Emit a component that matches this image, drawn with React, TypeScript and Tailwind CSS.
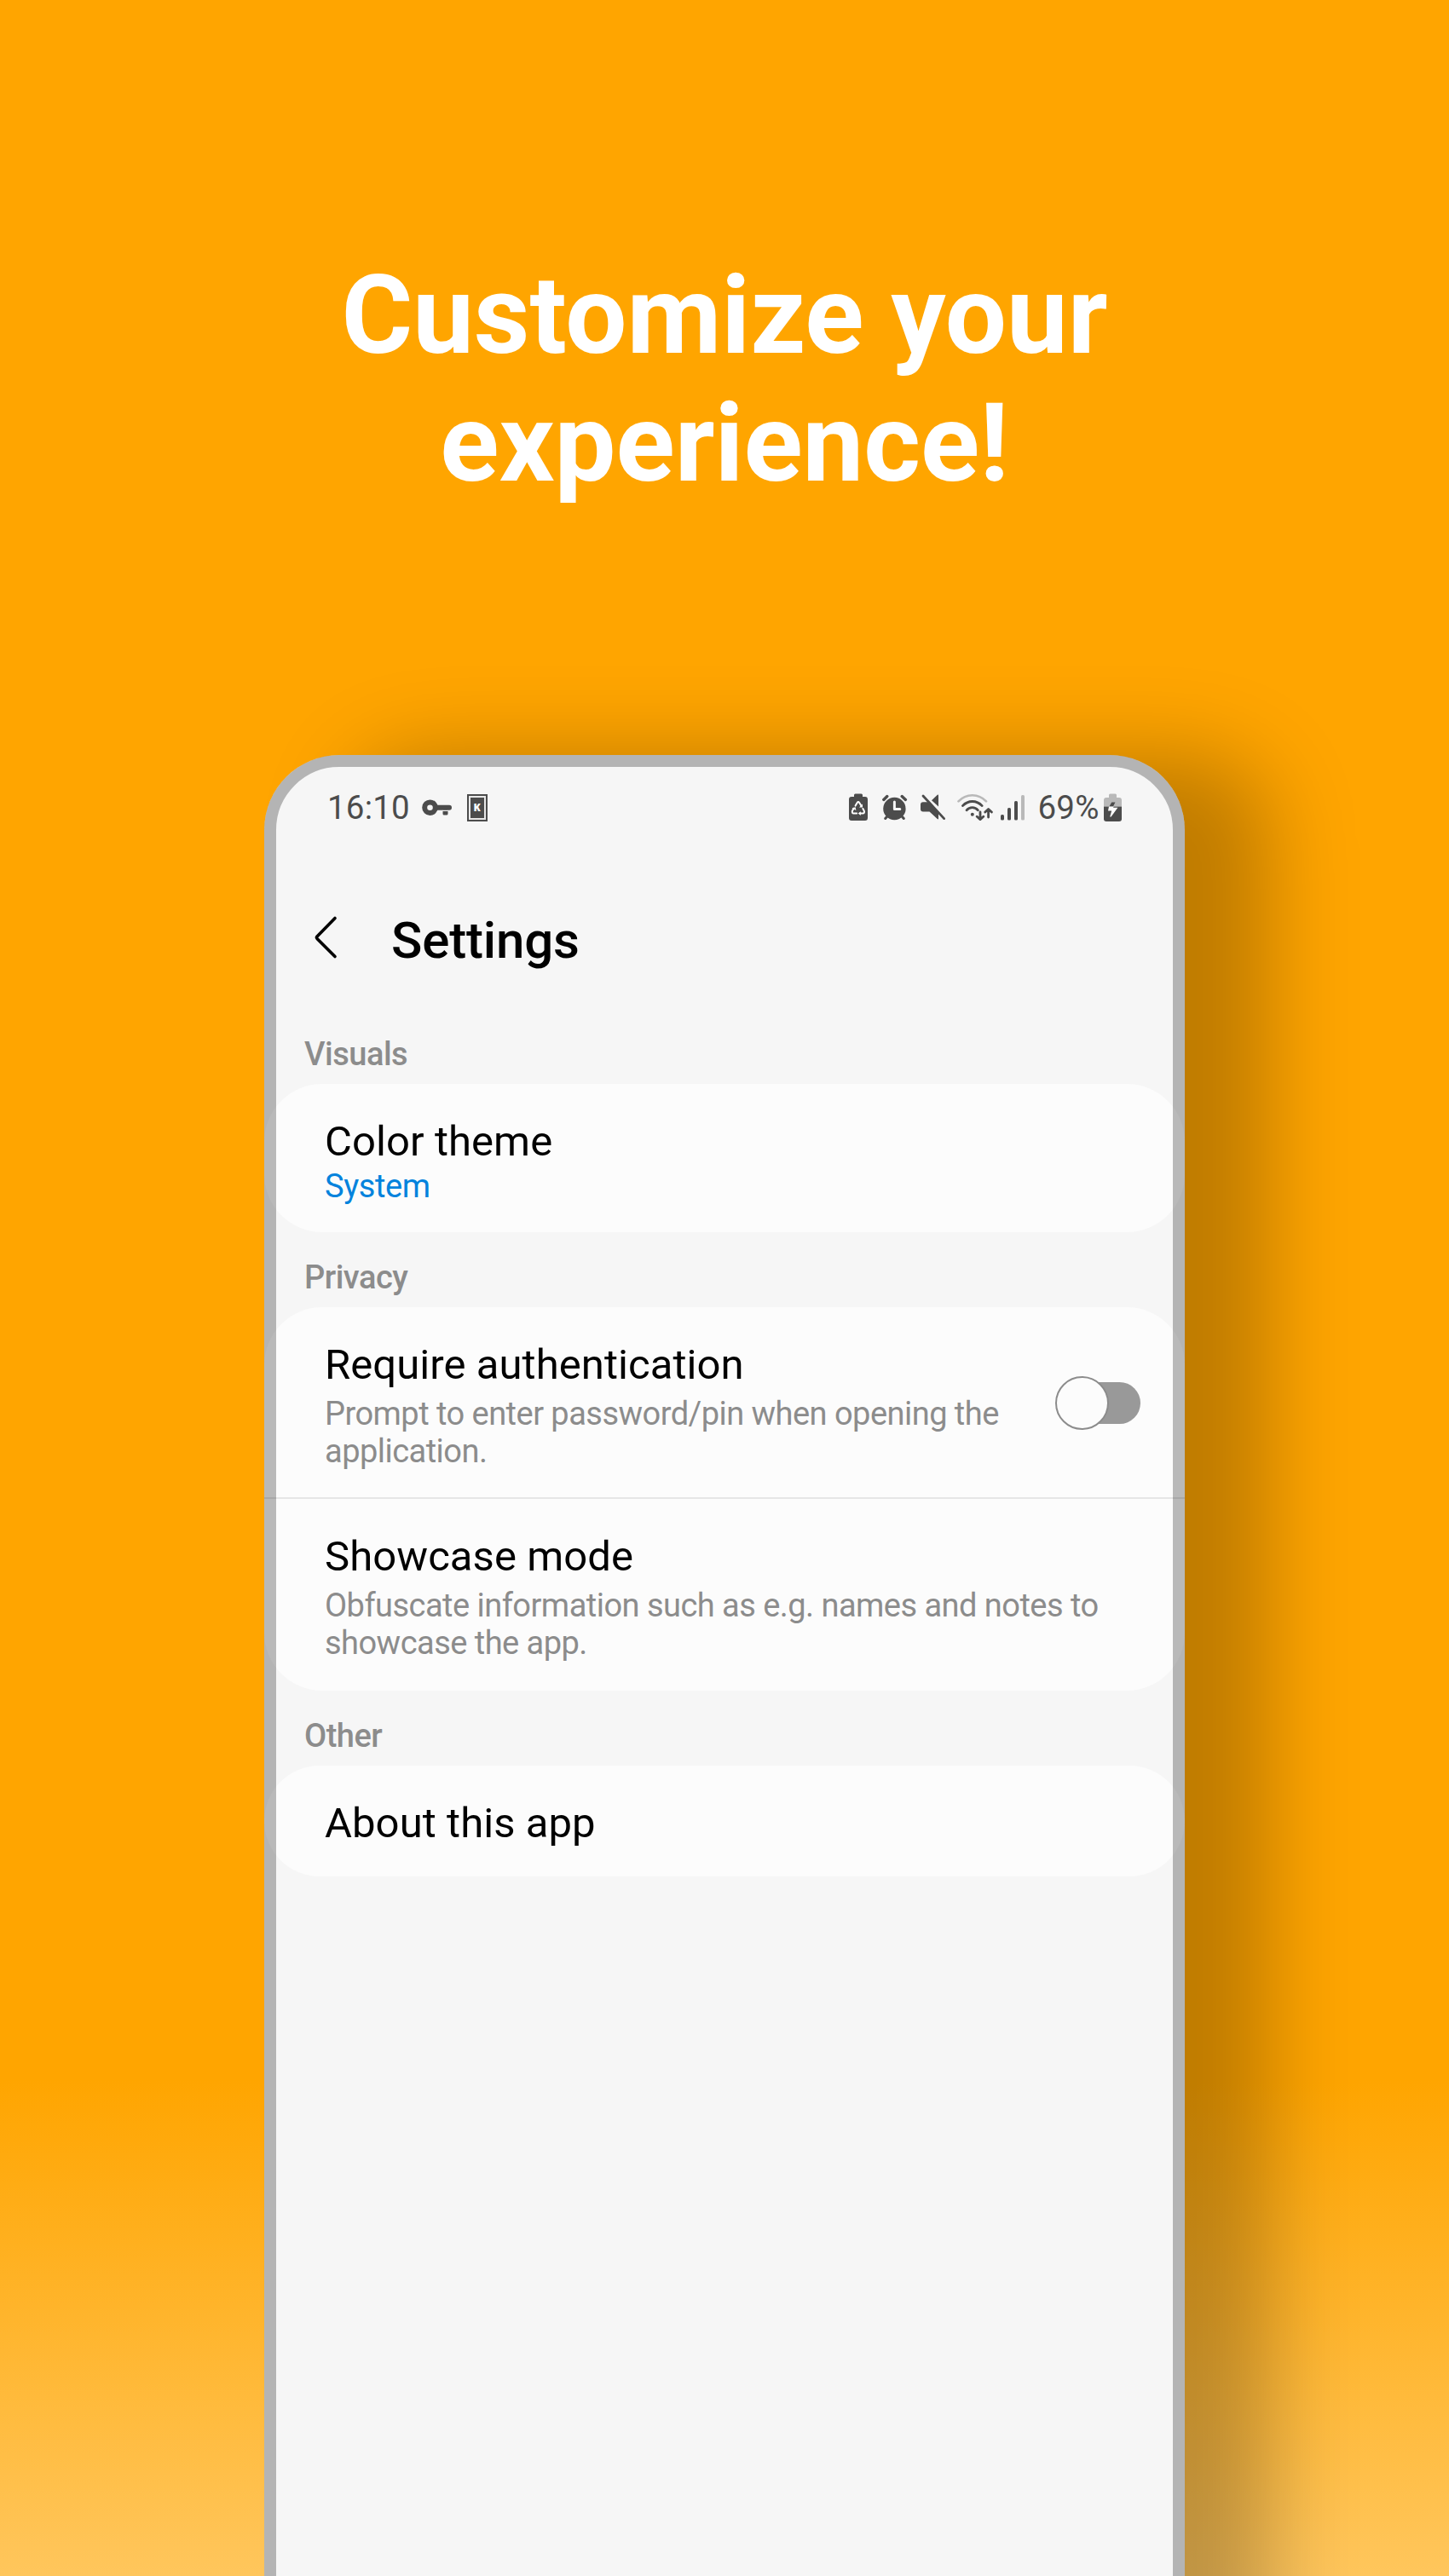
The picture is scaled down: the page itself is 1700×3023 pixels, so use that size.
import React from "react";

const DARK = "#4c4c4c";
const LIGHT = "#b9b9b9";

function KeyIcon() {
  return (
    <svg width="35" height="20" viewBox="0 0 35 20" fill="none">
      <circle cx="9.5" cy="9.7" r="6.3" stroke={DARK} strokeWidth="6" />
      <path d="M17 9.7H32" stroke={DARK} strokeWidth="6" strokeLinecap="round" />
      <path d="M24.5 12h6v5a1.6 1.6 0 0 1-1.6 1.6h-2.8a1.6 1.6 0 0 1-1.6-1.6z" fill={DARK} />
      <path d="M24 13.4h7" stroke="#f6f6f6" strokeWidth="1.2" />
    </svg>
  );
}

function KBoxIcon() {
  return (
    <div className="flex h-8 w-6 items-center justify-center border-2 border-[#4c4c4c] bg-[#e8e8e8]">
      <div className="flex h-6 w-4 items-center justify-center bg-[#4c4c4c] font-['Open_Sans'] text-[12px] leading-none font-extrabold text-white">
        K
      </div>
    </div>
  );
}

function RecycleBatteryIcon() {
  return (
    <svg width="22" height="32" viewBox="0 0 22 32" fill="none">
      <path d="M6 2Q6 .5 7.5 .5h7Q16 .5 16 2V4h3q3 0 3 3v22q0 3-3 3H3q-3 0-3-3V7q0-3 3-3h3z" fill={DARK} />
      <g stroke="#fff" strokeWidth="2" strokeLinecap="round" strokeLinejoin="round">
        <path d="M7.6 14.6 9.7 11q1.2-1.8 2.5 0l2.2 3.6" />
        <path d="M16.4 18l1.4 2.6q.8 2.8-1.6 3H12.8" />
        <path d="M9.2 23.6H5.6q-2.4-.2-1.6-3L5.6 17.8" />
      </g>
      <path d="M16 12.6v4h-4zM13.8 21.2v4.8l-3-2.4zM3.4 17.2l4.2-1 .8 3.8z" fill="#fff" />
    </svg>
  );
}

function AlarmIcon() {
  return (
    <svg width="30" height="32" viewBox="0 0 30 32" fill="none">
      <circle cx="14.4" cy="18" r="13.2" fill={DARK} />
      <path d="M1.8 7.4 5.8 3.6M23.2 3.6l4.2 3.8" stroke={DARK} strokeWidth="3.4" strokeLinecap="round" />
      <path d="M5.5 27.4 3.7 29.5M23.5 27.4l1.8 2.1" stroke={DARK} strokeWidth="3" strokeLinecap="round" />
      <path d="M14.4 10v8.6h6.4" stroke="#f6f6f6" strokeWidth="3" strokeLinecap="round" strokeLinejoin="round" />
    </svg>
  );
}

function MuteIcon() {
  return (
    <svg width="30" height="32" viewBox="0 0 30 32" fill="none">
      <path d="M3 10.2H8.5L21 22.5V29.5q0 1.5-1.3.6L10.5 21.6H3Q0 21.6 0 18.6v-5.4q0-3 3-3z" fill={DARK} />
      <path d="M21 2.6V15.6L13 8.2 19.8 1.8Q21 1.2 21 2.6z" fill={DARK} />
      <path d="M3 3 27.6 29.6" stroke={DARK} strokeWidth="2.8" strokeLinecap="round" />
    </svg>
  );
}

function WifiIcon() {
  return (
    <svg width="42" height="32" viewBox="0 0 42 32" fill="none">
      <path d="M1.5 9.4C10.5-.2 25-.2 34 9.4" stroke={LIGHT} strokeWidth="2.6" strokeLinecap="round" />
      <path d="M6.4 14.6c6.5-6.8 16.3-6.8 22.8 0" stroke={DARK} strokeWidth="2.8" strokeLinecap="round" />
      <path d="M11 19.8c3.6-4.2 9.8-4.2 13.4 0" stroke={DARK} strokeWidth="2.8" strokeLinecap="round" />
      <circle cx="17.8" cy="24.8" r="2" fill={DARK} />
      <path d="M27 22v8M23.2 27.2 27 30.6l3.8-3.4M36.6 28v-8.5M32.8 22l3.8-3.6L40.4 22" stroke={DARK} strokeWidth="2.8" strokeLinecap="round" strokeLinejoin="round" />
    </svg>
  );
}

function SignalIcon() {
  return (
    <svg width="28" height="32" viewBox="0 0 28 32">
      <rect x="0" y="25" width="4" height="6.5" rx="1.6" fill={DARK} />
      <rect x="8" y="17" width="4" height="14.5" rx="1.6" fill={DARK} />
      <rect x="16" y="9" width="4" height="22.5" rx="1.6" fill={DARK} />
      <rect x="24" y="2" width="4" height="29.5" rx="1.6" fill={LIGHT} />
    </svg>
  );
}

function ChargingIcon() {
  return (
    <svg width="21" height="33" viewBox="0 0 21 33">
      <path d="M6 2Q6 .5 7.5 .5h6Q15 .5 15 2V5h3q3 0 3 3v7.5H0V8q0-3 3-3h3z" fill={LIGHT} />
      <path d="M0 15.5h21V30q0 3-3 3H3q-3 0-3-3z" fill={DARK} />
      <path d="M9.2 10.5h4.2l-2.4 5H6.4z" fill={DARK} />
      <path d="M6 15.5h5.8l-.8 1.2h5.4L8.6 27.6H7.2l2-7.2H5z" fill="#fff" />
    </svg>
  );
}

function StatusBar() {
  return (
    <div className="flex h-[124px] items-center pl-[74px] text-[38.5px] leading-none text-[#4c4c4c]">
      <span className="w-[111px] tracking-[0.2px]">16:10</span>
      <KeyIcon />
      <div className="ml-[17.5px]">
        <KBoxIcon />
      </div>
      <div className="-mt-0.5 ml-[424.5px] flex items-center">
        <RecycleBatteryIcon />
        <div className="ml-[17px]"><AlarmIcon /></div>
        <div className="ml-[15px]"><MuteIcon /></div>
        <div className="ml-[13px]"><WifiIcon /></div>
        <div className="ml-[9px]"><SignalIcon /></div>
        <span className="ml-[15.5px] w-[77.5px] pt-0.5 tracking-[0.2px] whitespace-nowrap">69%</span>
        <ChargingIcon />
      </div>
    </div>
  );
}

function Label({ children }: { children: React.ReactNode }) {
  return (
    <h2 className="pl-[47px] text-[38px] leading-[44px] font-medium tracking-[-0.5px] text-[#8c8c8c]">
      {children}
    </h2>
  );
}

function Card({ children, className }: { children: React.ReactNode; className?: string }) {
  return <section className={`bg-[#fcfcfc] ${className ?? ""}`}>{children}</section>;
}

function Title({ children }: { children: React.ReactNode }) {
  return (
    <h3 className="text-[49px] leading-[58px] tracking-[0.07px] whitespace-nowrap text-black">{children}</h3>
  );
}

function Description({ children }: { children: React.ReactNode }) {
  return (
    <p className="mt-1.5 text-[38px] leading-[44.3px] tracking-[-0.53px] whitespace-nowrap text-[#8c8c8c]">
      {children}
    </p>
  );
}

export default function App() {
  return (
    <main className="h-[3023px] w-[1700px] overflow-hidden bg-[linear-gradient(to_bottom,#ffa500_0,#ffa500_2440px,#ffc65c_3023px)] pt-[295px] font-[Roboto,sans-serif]">
      <h1 className="text-center text-[128px] leading-[150px] font-bold text-white">
        Customize your
        <br />
        experience!
      </h1>

      <div className="relative mx-auto mt-[291px] h-[2400px] w-[1080px] rounded-[88px] bg-[#f6f6f6] shadow-[100px_0px_100px_0px_rgba(0,0,0,0.25)]">
        <StatusBar />

        <header className="mt-[55px] flex h-[70px] items-center">
          <svg className="ml-[58px]" width="28" height="52" viewBox="0 0 28 52" fill="none">
            <path d="M25 3.5 4 25a1.8 1.8 0 0 0 0 2.4L25 48.5" stroke="#000" strokeWidth="3.6" strokeLinecap="round" />
          </svg>
          <span className="mt-[7px] ml-[63px] text-[60px] leading-[70px] font-medium tracking-[-0.15px] text-black">
            Settings
          </span>
        </header>

        <div className="pt-[80px]">
          <Label>Visuals</Label>
        </div>
        <Card className="mt-[13px] h-[174px] rounded-[68px] pt-[39px] pl-[71px]">
          <Title>Color theme</Title>
          <p className="mt-px text-[38px] leading-[44px] tracking-[-0.4px] text-[#0383dd]">System</p>
        </Card>

        <div className="pt-[31px]">
          <Label>Privacy</Label>
        </div>
        <Card className="mt-[13px] h-[450px] rounded-[68px]">
          <div className="flex h-[223px] items-start pt-[39px] pl-[71px]">
            <div className="w-[857px]">
              <Title>Require authentication</Title>
              <Description>
                Prompt to enter password/pin when opening the
                <br />
                application.
              </Description>
            </div>
            <div className="relative mt-[49px] h-[49px] w-[100px]">
              <div className="absolute top-0 right-0 h-[49px] w-[84px] rounded-full bg-[#999]" />
              <div className="absolute top-[-7px] left-0 size-[63px] rounded-full border-[2.5px] border-[#8c8c8c] bg-[#fcfcfc]" />
            </div>
          </div>
          <div className="h-[2px] bg-[#e6e6e6]" />
          <div className="pt-[39px] pl-[71px]">
            <Title>Showcase mode</Title>
            <Description>
              Obfuscate information such as e.g. names and notes to
              <br />
              showcase the app.
            </Description>
          </div>
        </Card>

        <div className="pt-[31px]">
          <Label>Other</Label>
        </div>
        <Card className="mt-[13px] h-[130px] rounded-[65px] pt-[39px] pl-[71px]">
          <Title>About this app</Title>
        </Card>

        <div className="pointer-events-none absolute inset-0 rounded-[88px] border-[14px] border-black/[0.265]" />
      </div>
    </main>
  );
}
